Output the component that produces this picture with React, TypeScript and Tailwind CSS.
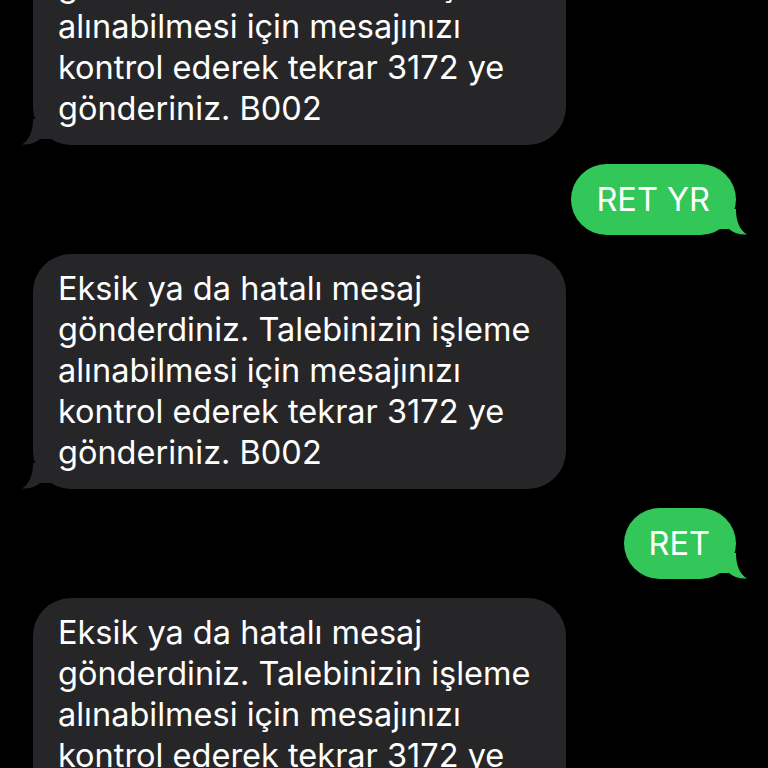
const ERROR_LINES = [
  'Eksik ya da hatalı mesaj',
  'gönderdiniz. Talebinizin işleme',
  'alınabilmesi için mesajınızı',
  'kontrol ederek tekrar 3172 ye',
  'gönderiniz. B002',
];

function IncomingBubble({ lines }: { lines: string[] }) {
  return (
    <div className="relative self-start ml-[33px] w-[533px] rounded-[38px] bg-[#262628] pl-[25px] pr-[20px] pt-[14px] pb-[16px]">
      {lines.map((l, i) => (
        <div key={i} className="whitespace-nowrap">{l}</div>
      ))}
      <svg className="absolute left-[-11px] bottom-0" width="32" height="26" viewBox="0 0 32 26">
        <path d="M11 0 C11 13 7 21 0 25.5 C7 26 13 24 18 20 L32 20 L32 0 Z" fill="#262628" />
      </svg>
    </div>
  );
}

function OutgoingBubble({ text }: { text: string }) {
  return (
    <div className="relative self-end mr-[32px] rounded-[36px] bg-[#33c659] pl-[25px] pr-[26px] pt-[15px] pb-[15px]">
      <div className="whitespace-nowrap">{text}</div>
      <svg className="absolute right-[-11px] bottom-0" width="32" height="26" viewBox="0 0 32 26">
        <path d="M21 0 C21 13 25 21 32 25.5 C25 26 19 24 14 20 L0 20 L0 0 Z" fill="#33c659" />
      </svg>
    </div>
  );
}

export default function App() {
  return (
    <div className="w-[768px] h-[768px] overflow-hidden bg-black text-white text-[32.5px] leading-[41px] font-['Inter','Liberation_Sans',sans-serif]">
      <div className="flex flex-col gap-[19px] mt-[-90px]">
        <IncomingBubble lines={ERROR_LINES} />
        <OutgoingBubble text="RET YR" />
        <IncomingBubble lines={ERROR_LINES} />
        <OutgoingBubble text="RET" />
        <IncomingBubble lines={ERROR_LINES} />
      </div>
    </div>
  );
}
